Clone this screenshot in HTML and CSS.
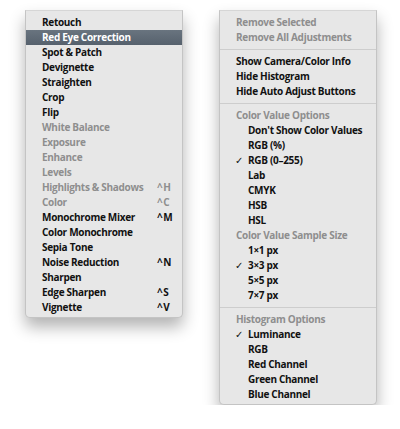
FILE: index.html
```html
<!DOCTYPE html>
<html lang="en">
<head>
  <meta charset="UTF-8">
  <title>Adjustment Menus</title>
  <link rel="stylesheet" href="styles.css">
</head>
<body>
  <div class="stage">
    <!-- Adjustments menu -->
    <ul class="menu">
      <li class="item">Retouch</li>
      <li class="item selected">Red Eye Correction</li>
      <li class="item">Spot &amp; Patch</li>
      <li class="item">Devignette</li>
      <li class="item">Straighten</li>
      <li class="item">Crop</li>
      <li class="item">Flip</li>
      <li class="item off">White Balance</li>
      <li class="item off">Exposure</li>
      <li class="item off">Enhance</li>
      <li class="item off">Levels</li>
      <li class="item off">Highlights &amp; Shadows <span class="key">^H</span></li>
      <li class="item off">Color <span class="key">^C</span></li>
      <li class="item">Monochrome Mixer <span class="key">^M</span></li>
      <li class="item">Color Monochrome</li>
      <li class="item">Sepia Tone</li>
      <li class="item">Noise Reduction <span class="key">^N</span></li>
      <li class="item">Sharpen</li>
      <li class="item">Edge Sharpen <span class="key">^S</span></li>
      <li class="item">Vignette <span class="key">^V</span></li>
    </ul>

    <!-- Options menu -->
    <ul class="menu">
      <li class="item off">Remove Selected</li>
      <li class="item off">Remove All Adjustments</li>
      <li class="sep"></li>
      <li class="item">Show Camera/Color Info</li>
      <li class="item">Hide Histogram</li>
      <li class="item">Hide Auto Adjust Buttons</li>
      <li class="sep"></li>
      <li class="item off">Color Value Options</li>
      <li class="item sub">Don't Show Color Values</li>
      <li class="item sub">RGB (%)</li>
      <li class="item sub checked">RGB (0–255)</li>
      <li class="item sub">Lab</li>
      <li class="item sub">CMYK</li>
      <li class="item sub">HSB</li>
      <li class="item sub">HSL</li>
      <li class="item off">Color Value Sample Size</li>
      <li class="item sub">1×1 px</li>
      <li class="item sub checked">3×3 px</li>
      <li class="item sub">5×5 px</li>
      <li class="item sub">7×7 px</li>
      <li class="sep"></li>
      <li class="item off">Histogram Options</li>
      <li class="item sub checked">Luminance</li>
      <li class="item sub">RGB</li>
      <li class="item sub">Red Channel</li>
      <li class="item sub">Green Channel</li>
      <li class="item sub">Blue Channel</li>
    </ul>
  </div>
</body>
</html>
```

FILE: styles.css
```css
body {
  margin: 0;
  background-color: #ffffff;
  font-family: "Open Sans", "DejaVu Sans", sans-serif;
}

.stage {
  display: flex;
  align-items: flex-start;
  gap: 36px;
  padding: 10px 0 0 25px;
}

.menu {
  list-style: none;
  margin: 0;
  padding: 4px 0 2px;
  width: 158px;
  box-sizing: border-box;
  background-color: #e7e7e7;
  border: 1px solid #c4c4c4;
  border-top-color: #d6d6d6;
  border-radius: 0 0 5px 5px;
  box-shadow: 0 9px 16px rgba(0, 0, 0, 0.3);
}

.item {
  position: relative;
  display: flex;
  justify-content: space-between;
  height: 15px;
  line-height: 15px;
  padding: 0 9px 0 16px;
  font-size: 10px;
  font-weight: 700;
  letter-spacing: -0.3px;
  color: #111111;
  white-space: nowrap;
}

.item.off {
  color: #8e8e8e;
}

.item.sub {
  padding-left: 28px;
}

.item.checked::before {
  content: "\2713";
  position: absolute;
  left: 15px;
  font-family: "DejaVu Sans", sans-serif;
  font-size: 10px;
  font-weight: 700;
}

.item.selected {
  background: linear-gradient(#69747f, #56616d);
  color: #ffffff;
}

.key {
  width: 16px;
  letter-spacing: 0.6px;
}

.sep {
  height: 0;
  margin: 4px 0 4px;
  border-top: 1px solid #cdcdcd;
}
```
